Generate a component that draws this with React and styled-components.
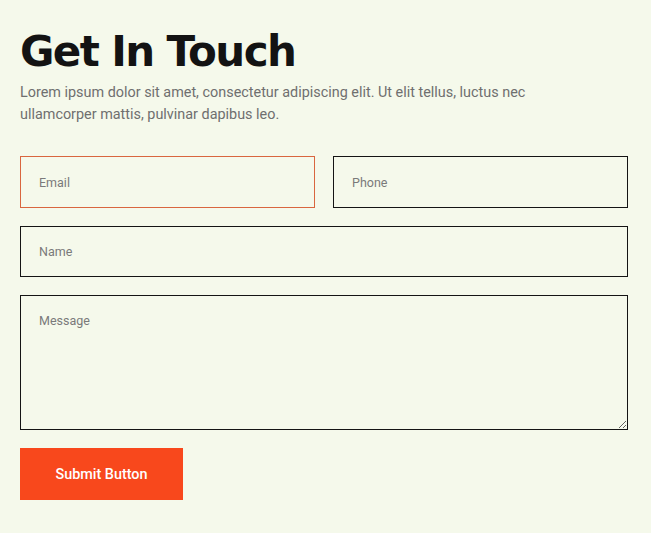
import React from "react";
import styled, { createGlobalStyle } from "styled-components";

const GlobalStyle = createGlobalStyle`
  html, body {
    margin: 0;
    padding: 0;
    background: #f5f9eb;
  }
  body {
    font-family: Roboto, "Liberation Sans", sans-serif;
  }
`;

const Section = styled.section`
  box-sizing: border-box;
  width: 651px;
  min-height: 533px;
  padding: 26px 23px 20px 20px;
  background: #f5f9eb;
`;

const Title = styled.h1`
  margin: 0;
  font-family: "DejaVu Sans", sans-serif;
  font-weight: 900;
  font-size: 42px;
  line-height: 52px;
  letter-spacing: -1.6px;
  color: #131313;
`;

const Lead = styled.p`
  margin: 4px 0 0;
  width: 560px;
  font-size: 14.4px;
  line-height: 22px;
  color: #6f6f6f;
`;

const Form = styled.form`
  display: grid;
  grid-template-columns: 1fr 1fr;
  gap: 18px;
  margin-top: 30px;
`;

const Field = styled.input`
  box-sizing: border-box;
  grid-column: ${(p) => (p.$wide ? "1 / -1" : "auto")};
  height: ${(p) => (p.$wide ? "51px" : "52px")};
  padding: 0 18px;
  border: 1px solid ${(p) => (p.$active ? "#d9663f" : "#141414")};
  border-radius: 0;
  background: transparent;
  font-family: Roboto, "Liberation Sans", sans-serif;
  font-size: 12.5px;
  color: #333;
  outline: none;
  &::placeholder {
    color: #7a7a7a;
  }
`;

const Message = styled.textarea`
  box-sizing: border-box;
  grid-column: 1 / -1;
  height: 135px;
  padding: 17px 18px;
  border: 1px solid #141414;
  border-radius: 0;
  background: transparent;
  font-family: Roboto, "Liberation Sans", sans-serif;
  font-size: 12.5px;
  color: #333;
  resize: vertical;
  outline: none;
  display: block;
  &::placeholder {
    color: #7a7a7a;
  }
`;

const Submit = styled.button`
  grid-column: 1 / -1;
  justify-self: start;
  width: 163px;
  height: 52px;
  border: none;
  border-radius: 0;
  background: #f8481c;
  color: #ffffff;
  font-family: Roboto, "Liberation Sans", sans-serif;
  font-weight: 500;
  font-size: 14.4px;
  cursor: pointer;
`;

export default function App() {
  return (
    <>
      <GlobalStyle />
      <Section>
        <Title>Get In Touch</Title>
        <Lead>
          Lorem ipsum dolor sit amet, consectetur adipiscing elit. Ut elit
          tellus, luctus nec ullamcorper mattis, pulvinar dapibus leo.
        </Lead>
        <Form onSubmit={(e) => e.preventDefault()}>
          <Field type="email" placeholder="Email" $active />
          <Field type="tel" placeholder="Phone" />
          <Field type="text" placeholder="Name" $wide />
          <Message placeholder="Message" />
          <Submit type="submit">Submit Button</Submit>
        </Form>
      </Section>
    </>
  );
}
